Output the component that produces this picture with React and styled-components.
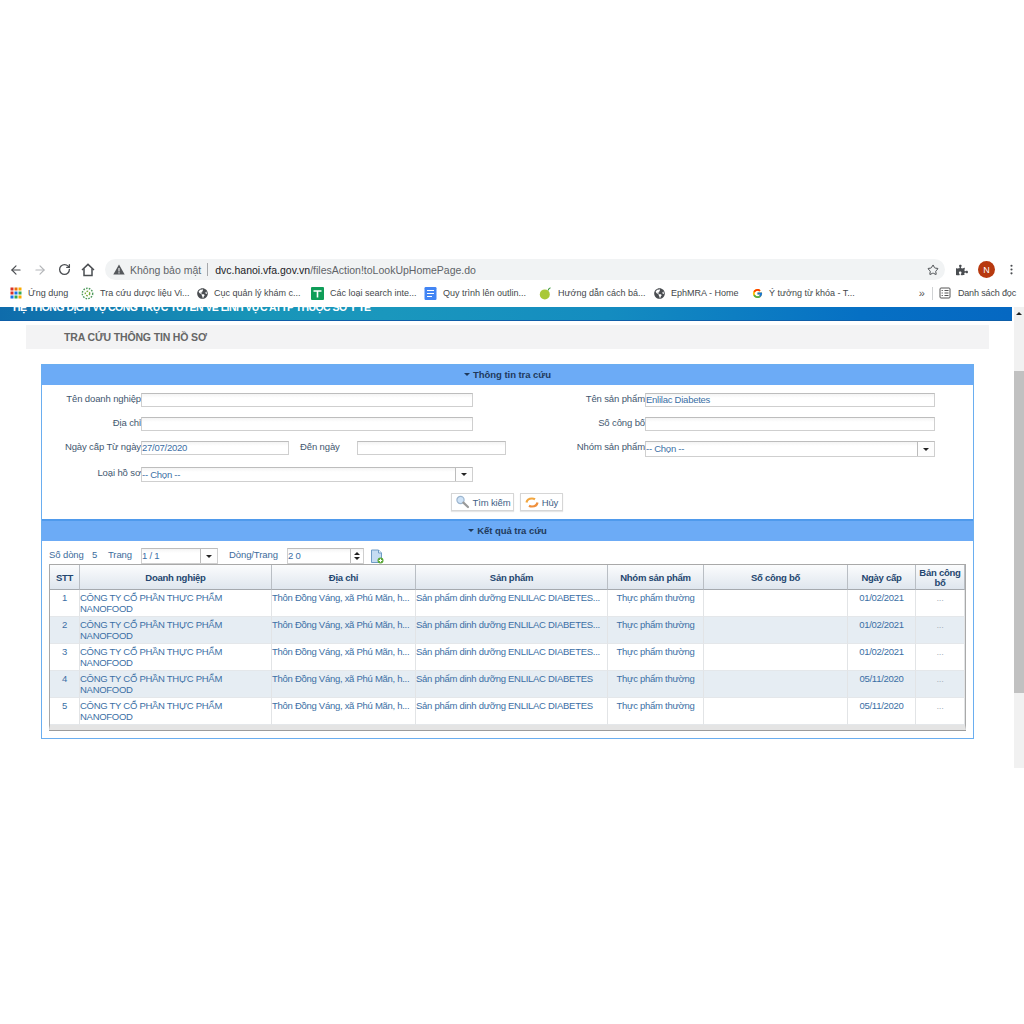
import React from 'react'
import styled, { createGlobalStyle } from 'styled-components'
import { ArrowLeft, ArrowRight, RotateCw, Star, MoreVertical } from 'lucide-react'
import { FaGlobeAmericas, FaPuzzlePiece } from 'react-icons/fa'
import { FcGoogle } from 'react-icons/fc'

const GlobalStyle = createGlobalStyle`
  html, body {
    margin: 0;
    padding: 0;
    background: #fff;
    font-family: "Liberation Sans", Arial, sans-serif;
  }
`

const Screen = styled.div`
  width: 1024px;
  height: 1024px;
  padding-top: 256px;
  box-sizing: border-box;
  overflow: hidden;
`

const Toolbar = styled.div`
  height: 27px;
  display: flex;
  align-items: center;
  color: #5f6368;
`

const NavButton = styled.span`
  width: 24px;
  height: 24px;
  display: flex;
  align-items: center;
  justify-content: center;
  color: ${(p) => (p.$off ? '#b4b6b9' : '#4a4d51')};
`

const NavGroup = styled.div`
  display: flex;
  margin-left: 4px;
`

const Omnibox = styled.div`
  margin-left: 5px;
  width: 840px;
  height: 21px;
  border-radius: 11px;
  background: #f1f3f4;
  display: flex;
  align-items: center;
  box-sizing: border-box;
  padding: 0 6px 0 8px;
  font-size: 10.5px;
  color: #5f6368;
`

const Secure = styled.span`
  margin-left: 5px;
`

const Divider = styled.span`
  width: 1px;
  height: 13px;
  background: #a6a8ab;
  margin: 0 7px 0 6px;
`

const Host = styled.span`
  color: #202124;
`

const Path = styled.span`
  color: #5f6368;
  flex: 1;
`

const ToolbarEnd = styled.div`
  display: flex;
  align-items: center;
  margin-left: 11px;
  gap: 10px;
  color: #4a4d51;
`

const Avatar = styled.span`
  width: 17px;
  height: 17px;
  border-radius: 50%;
  background: #b7390f;
  color: #fff;
  font-size: 9px;
  display: flex;
  align-items: center;
  justify-content: center;
`

const Bookmarks = styled.div`
  height: 24px;
  display: flex;
  align-items: center;
  padding-left: 10px;
  padding-bottom: 4px;
  box-sizing: border-box;
  font-size: 9px;
  color: #44474a;
  white-space: nowrap;
`

const Bookmark = styled.span`
  display: flex;
  align-items: center;
  gap: 6px;
  width: ${(p) => p.$w}px;
  flex: none;
  overflow: hidden;
`

const BookmarkEnd = styled.div`
  margin-left: auto;
  display: flex;
  align-items: center;
  padding-right: 8px;
`

const ReadingLabel = styled.span`
  margin-left: 7px;
  letter-spacing: -0.15px;
`

const Chevrons = styled.span`
  font-size: 11px;
  color: #555;
`

const BarSep = styled.span`
  width: 1px;
  height: 13px;
  background: #d0d2d4;
  margin: 0 6px 0 7px;
`

const Viewport = styled.div`
  height: 461px;
  display: flex;
`

const Page = styled.div`
  width: 1014px;
  flex: none;
`

const Banner = styled.div`
  width: 1012px;
  height: 14px;
  overflow: hidden;
  background: linear-gradient(90deg, #0f6cab 0%, #1895b8 25%, #1a97bd 38%, #148cc0 60%, #0670c4 85%, #0568c2 100%);
  border-bottom: 1px solid #0e5ea8;
  box-sizing: border-box;
  padding-left: 13px;
`

const BannerTitle = styled.div`
  margin-top: -6px;
  font-size: 10.5px;
  letter-spacing: -0.55px;
  line-height: 13px;
  font-weight: bold;
  color: #fff;
  white-space: nowrap;
`

const PageTitle = styled.h1`
  margin: 4px 0 0 26px;
  width: 963px;
  height: 24px;
  background: #f3f3f4;
  font-size: 10.5px;
  letter-spacing: -0.15px;
  line-height: 24px;
  font-weight: bold;
  color: #666;
  padding-left: 38px;
  box-sizing: border-box;
`

const Panel = styled.section`
  margin: 15px 0 0 41px;
  width: 933px;
  height: 375px;
  box-sizing: border-box;
  border: 1px solid #6aaef0;
`

const PanelHead = styled.div`
  height: ${(p) => p.$h}px;
  background: #6cabf6;
  border-top: ${(p) => (p.$line ? '2px solid #4f9aec' : 'none')};
  box-sizing: border-box;
  display: flex;
  align-items: center;
  justify-content: center;
  gap: 3px;
  padding-bottom: 2px;
  font-size: 9.5px;
  letter-spacing: -0.05px;
  font-weight: bold;
  color: #1f3a5c;
`

const Caret = styled.span`
  width: 0;
  height: 0;
  border-left: 3px solid transparent;
  border-right: 3px solid transparent;
  border-top: 3px solid ${(p) => p.$color || '#1f3a5c'};
`

const Form = styled.div`
  height: 134px;
  padding-top: 8px;
  box-sizing: border-box;
`

const FormCols = styled.div`
  display: flex;
`

const FormCol = styled.div`
  width: ${(p) => p.$w}px;
  flex: none;
  display: flex;
  flex-direction: column;
`

const FormRow = styled.div`
  height: ${(p) => p.$h || 24}px;
  display: flex;
  align-items: flex-start;
`

const Label = styled.label`
  width: ${(p) => p.$w}px;
  flex: none;
  text-align: right;
  font-size: 9.5px;
  letter-spacing: -0.12px;
  line-height: 12px;
  color: #43576f;
  white-space: nowrap;
`

const Field = styled.div`
  width: ${(p) => p.$w}px;
  height: ${(p) => p.$h || 14}px;
  flex: none;
  box-sizing: border-box;
  border: 1px solid #cfcfcf;
  border-top-color: #bdbdbd;
  background: linear-gradient(#f4f4f4, #fff 4px);
  font-size: 9.5px;
  letter-spacing: -0.25px;
  line-height: 12px;
  color: #3b6fa5;
  display: flex;
  align-items: center;
  justify-content: space-between;
  white-space: nowrap;
`

const SelectBtn = styled.span`
  width: 16px;
  align-self: stretch;
  border-left: 1px solid #bcbcbc;
  background: #fdfdfd;
  display: flex;
  align-items: center;
  justify-content: center;
`

const SpinBtn = styled.span`
  width: 12px;
  align-self: stretch;
  border-left: 1px solid #bcbcbc;
  display: flex;
  flex-direction: column;
  align-items: center;
  justify-content: center;
  gap: 2px;
`

const CaretUp = styled.span`
  width: 0;
  height: 0;
  border-left: 3px solid transparent;
  border-right: 3px solid transparent;
  border-bottom: 3px solid #222;
`

const ToLabel = styled.span`
  width: 57px;
  flex: none;
  margin-left: 11px;
  font-size: 9.5px;
  letter-spacing: -0.12px;
  line-height: 12px;
  color: #43576f;
`

const Actions = styled.div`
  display: flex;
  justify-content: center;
  gap: 6px;
  margin: 2px 1px 0 0;
`

const Button = styled.button`
  height: 18px;
  width: ${(p) => p.$w}px;
  padding: 0;
  display: flex;
  align-items: center;
  justify-content: center;
  gap: 3px;
  background: #fff;
  border: 1px solid #d6d6d6;
  box-shadow: 0 1px 1px #e6e6e6;
  font-family: inherit;
  font-size: 9.5px;
  letter-spacing: -0.15px;
  color: #3f5f86;
`

const Results = styled.div`
  padding: 7px 8px 0 7px;
`

const ResultBar = styled.div`
  height: 16px;
  display: flex;
  align-items: center;
  font-size: 9.5px;
  letter-spacing: -0.1px;
  color: #3d6c9c;
  white-space: nowrap;
`

const BarText = styled.span`
  width: ${(p) => p.$w}px;
  flex: none;
  margin: -3px 0 0 ${(p) => p.$ml || 0}px;
`

const ExportSlot = styled.span`
  margin-left: 6px;
  display: flex;
`

const Table = styled.table`
  width: 917px;
  border-collapse: separate;
  border-spacing: 0;
  table-layout: fixed;
  border: 1px solid #a9a9a9;
  border-bottom: 5px solid #e4e4e4;
  box-shadow: 0 1px 0 #9c9c9c;
  font-size: 9.5px;
`

const Th = styled.th`
  height: 25px;
  padding: 1px 0 0 0;
  box-sizing: border-box;
  background: linear-gradient(#fbfcfd, #dfe6ee);
  border-right: 1px solid #b9bec4;
  border-bottom: 1px solid #a5a9ae;
  color: #24466f;
  font-weight: bold;
  letter-spacing: -0.25px;
  line-height: 10px;
  text-align: center;
`

const Td = styled.td`
  height: 27px;
  box-sizing: border-box;
  padding: 3px 0 0 0;
  vertical-align: top;
  text-align: ${(p) => (p.$center ? 'center' : 'left')};
  border-right: 1px solid #e2e4e6;
  border-bottom: 1px solid #e4e7ea;
  color: ${(p) => (p.$faint ? '#a9b2bd' : '#3b6fa5')};
  letter-spacing: -0.28px;
  line-height: 10.5px;
  background: ${(p) => (p.$alt ? '#e6edf3' : '#fff')};
  white-space: ${(p) => (p.$wrap ? 'normal' : 'nowrap')};
`

const Scrollbar = styled.div`
  width: 10px;
  flex: none;
  background: #f1f1f1;
  display: flex;
  flex-direction: column;
  align-items: center;
`

const ScrollUp = styled.span`
  height: 13px;
  display: flex;
  align-items: center;
`

const ScrollThumb = styled.div`
  width: 100%;
  height: 322px;
  margin-top: 51px;
  background: #c1c1c1;
`

const Grid3 = () => (
  <svg width="12" height="12" viewBox="0 0 12 12">
    {['#d93025', '#e8710a', '#f9ab00', '#d93025', '#1a73e8', '#34a853', '#1a73e8', '#34a853', '#f9ab00'].map((c, i) => (
      <rect key={i} x={(i % 3) * 4 + 0.5} y={Math.floor(i / 3) * 4 + 0.5} width="3" height="3" fill={c} />
    ))}
  </svg>
)

const HomeIcon = () => (
  <svg width="14" height="14" viewBox="0 0 14 14" fill="none" stroke="#4a4d51" strokeWidth="1.5" strokeLinejoin="miter">
    <path d="M1 7 7 1.4 13 7" />
    <path d="M3 5.6V12.5H11V5.6" />
  </svg>
)

const HerbIcon = () => (
  <svg width="13" height="13" viewBox="0 0 13 13" fill="none" stroke="#4f9a5c" strokeWidth="1.4" strokeDasharray="1.6 1.2">
    <circle cx="6.5" cy="6.5" r="5.2" />
    <circle cx="6.5" cy="6.5" r="2.2" stroke="#7cab3c" />
  </svg>
)

const SheetIcon = () => (
  <svg width="13" height="13" viewBox="0 0 13 13">
    <rect width="13" height="13" rx="1" fill="#0f9d58" />
    <path d="M2.5 4h8M6.5 4v6.5" stroke="#fff" strokeWidth="1.6" fill="none" />
  </svg>
)

const DocIcon = () => (
  <svg width="13" height="13" viewBox="0 0 13 13">
    <rect x="0.5" width="12" height="13" rx="1.2" fill="#4285f4" />
    <path d="M3 3.5h7M3 6.5h7M3 9.5h5" stroke="#fff" strokeWidth="1.2" fill="none" />
  </svg>
)

const FruitIcon = () => (
  <svg width="13" height="13" viewBox="0 0 13 13">
    <circle cx="5.8" cy="7.4" r="5" fill="#a9c837" />
    <path d="M9.2 3.4c.2-1.3 1-2.2 2.3-2.6" stroke="#3c9a3f" strokeWidth="1.2" fill="none" />
  </svg>
)

const ReadingIcon = () => (
  <svg width="12" height="12" viewBox="0 0 12 12" fill="none" stroke="#555" strokeWidth="1">
    <rect x="1" y="1" width="10" height="10" rx="1" />
    <path d="M5.5 3.5h4M5.5 6h4M5.5 8.5h4M2.6 3.5h1.2M2.6 6h1.2M2.6 8.5h1.2" />
  </svg>
)

const Warning = () => (
  <svg width="12" height="11" viewBox="0 0 12 11">
    <path d="M6 .5 11.7 10.5H.3Z" fill="#55585c" />
    <path d="M6 4v3.4M6 8.2v1.2" stroke="#f1f3f4" strokeWidth="1.1" />
  </svg>
)

const SearchIcon = () => (
  <svg width="15" height="14" viewBox="0 0 15 14">
    <circle cx="5.5" cy="5" r="3.6" fill="#cfe3f7" stroke="#9db6cf" strokeWidth="1.2" />
    <path d="M8.4 7.6 13 12" stroke="#9a9a9a" strokeWidth="2.2" strokeLinecap="round" />
  </svg>
)

const ResetIcon = () => (
  <svg width="14" height="11" viewBox="0 0 14 11" fill="none" strokeWidth="2.2">
    <path d="M1.5 5.5C2 2.8 4.2 1.5 7 1.5c1.2 0 2.2.3 3 .8" stroke="#f2a63f" />
    <path d="M12.5 5.5C12 8.2 9.8 9.5 7 9.5c-1.2 0-2.2-.3-3-.8" stroke="#ef8f3c" />
  </svg>
)

const ExportIcon = () => (
  <svg width="14" height="15" viewBox="0 0 14 15">
    <path d="M1.5 1h7l3 3v9.5h-10Z" fill="#c5dcf2" stroke="#6f9cc6" />
    <path d="M8.5 1v3h3" fill="#eef5fb" stroke="#6f9cc6" />
    <circle cx="10.5" cy="11.5" r="3" fill="#5aa838" />
    <path d="M10.5 9.8v3.4M8.8 11.5h3.4" stroke="#fff" strokeWidth="1" />
  </svg>
)

const columns = [
  { title: 'STT', width: 30 },
  { title: 'Doanh nghiệp', width: 192 },
  { title: 'Địa chỉ', width: 144 },
  { title: 'Sản phẩm', width: 192 },
  { title: 'Nhóm sản phẩm', width: 96 },
  { title: 'Số công bố', width: 144 },
  { title: 'Ngày cấp', width: 68 },
  { title: 'Bản công bố', width: 49 },
]

const rows = [
  { id: 1, product: 'Sản phẩm dinh dưỡng ENLILAC DIABETES...', date: '01/02/2021' },
  { id: 2, product: 'Sản phẩm dinh dưỡng ENLILAC DIABETES...', date: '01/02/2021' },
  { id: 3, product: 'Sản phẩm dinh dưỡng ENLILAC DIABETES...', date: '01/02/2021' },
  { id: 4, product: 'Sản phẩm dinh dưỡng ENLILAC DIABETES', date: '05/11/2020' },
  { id: 5, product: 'Sản phẩm dinh dưỡng ENLILAC DIABETES', date: '05/11/2020' },
]

const App = () => (
  <Screen>
    <GlobalStyle />
    <Toolbar>
      <NavGroup>
        <NavButton><ArrowLeft size={14} strokeWidth={2} /></NavButton>
        <NavButton $off><ArrowRight size={14} strokeWidth={2} /></NavButton>
        <NavButton><RotateCw size={13} strokeWidth={2.4} /></NavButton>
        <NavButton><HomeIcon /></NavButton>
      </NavGroup>
      <Omnibox>
        <Warning />
        <Secure>Không bảo mật</Secure>
        <Divider />
        <Host>dvc.hanoi.vfa.gov.vn</Host>
        <Path>/filesAction!toLookUpHomePage.do</Path>
        <Star size={12} color="#4a4d51" />
      </Omnibox>
      <ToolbarEnd>
        <FaPuzzlePiece size={12} />
        <Avatar>N</Avatar>
        <MoreVertical size={13} />
      </ToolbarEnd>
    </Toolbar>
    <Bookmarks>
      <Bookmark $w={71}><Grid3 />Ứng dụng</Bookmark>
      <Bookmark $w={116}><HerbIcon />Tra cứu dược liệu Vi...</Bookmark>
      <Bookmark $w={114}><FaGlobeAmericas size={11} color="#4a4d51" />Cục quản lý khám c...</Bookmark>
      <Bookmark $w={113}><SheetIcon />Các loại search inte...</Bookmark>
      <Bookmark $w={115}><DocIcon />Quy trình lên outlin...</Bookmark>
      <Bookmark $w={115}><FruitIcon />Hướng dẫn cách bá...</Bookmark>
      <Bookmark $w={98}><FaGlobeAmericas size={11} color="#4a4d51" />EphMRA - Home</Bookmark>
      <Bookmark $w={110}><FcGoogle size={11} />Ý tưởng từ khóa - T...</Bookmark>
      <BookmarkEnd>
        <Chevrons>»</Chevrons>
        <BarSep />
        <ReadingIcon />
        <ReadingLabel>Danh sách đọc</ReadingLabel>
      </BookmarkEnd>
    </Bookmarks>
    <Viewport>
      <Page>
        <Banner>
          <BannerTitle>HỆ THỐNG DỊCH VỤ CÔNG TRỰC TUYẾN VỀ LĨNH VỰC ATTP THUỘC SỞ Y TẾ</BannerTitle>
        </Banner>
        <PageTitle>TRA CỨU THÔNG TIN HỒ SƠ</PageTitle>
        <Panel>
          <PanelHead $h={20}><Caret />Thông tin tra cứu</PanelHead>
          <Form>
            <FormCols>
              <FormCol $w={504}>
                <FormRow>
                  <Label $w={99}>Tên doanh nghiệp</Label>
                  <Field $w={332} />
                </FormRow>
                <FormRow>
                  <Label $w={99}>Địa chỉ</Label>
                  <Field $w={332} />
                </FormRow>
                <FormRow $h={26}>
                  <Label $w={99}>Ngày cấp Từ ngày</Label>
                  <Field $w={148}>27/07/2020</Field>
                  <ToLabel>Đến ngày</ToLabel>
                  <Field $w={149} />
                </FormRow>
                <FormRow>
                  <Label $w={99}>Loại hồ sơ</Label>
                  <Field $w={332} $h={15}>-- Chọn --<SelectBtn><Caret $color="#222" /></SelectBtn></Field>
                </FormRow>
              </FormCol>
              <FormCol $w={427}>
                <FormRow>
                  <Label $w={99}>Tên sản phẩm</Label>
                  <Field $w={290}>Enlilac Diabetes</Field>
                </FormRow>
                <FormRow>
                  <Label $w={99}>Số công bố</Label>
                  <Field $w={290} />
                </FormRow>
                <FormRow>
                  <Label $w={99}>Nhóm sản phẩm</Label>
                  <Field $w={290} $h={16}>-- Chọn --<SelectBtn><Caret $color="#222" /></SelectBtn></Field>
                </FormRow>
              </FormCol>
            </FormCols>
            <Actions>
              <Button $w={63}><SearchIcon />Tìm kiếm</Button>
              <Button $w={43}><ResetIcon />Hủy</Button>
            </Actions>
          </Form>
          <PanelHead $h={22} $line><Caret />Kết quả tra cứu</PanelHead>
          <Results>
            <ResultBar>
              <BarText $w={43}>Số dòng</BarText>
              <BarText $w={16}>5</BarText>
              <BarText $w={33}>Trang</BarText>
              <Field $w={77} $h={16}>1 / 1<SelectBtn><Caret $color="#222" /></SelectBtn></Field>
              <BarText $w={58} $ml={11}>Dòng/Trang</BarText>
              <Field $w={77} $h={16}>2 0<SpinBtn><CaretUp /><Caret $color="#222" /></SpinBtn></Field>
              <ExportSlot><ExportIcon /></ExportSlot>
            </ResultBar>
            <Table>
              <colgroup>
                {columns.map((c) => <col key={c.title} style={{ width: c.width }} />)}
              </colgroup>
              <thead>
                <tr>
                  {columns.map((c) => <Th key={c.title}>{c.title}</Th>)}
                </tr>
              </thead>
              <tbody>
                {rows.map((r) => {
                  const alt = r.id % 2 === 0
                  return (
                    <tr key={r.id}>
                      <Td $alt={alt} $center>{r.id}</Td>
                      <Td $alt={alt} $wrap>CÔNG TY CỔ PHẦN THỰC PHẨM NANOFOOD</Td>
                      <Td $alt={alt}>Thôn Đồng Váng, xã Phú Mãn, h...</Td>
                      <Td $alt={alt}>{r.product}</Td>
                      <Td $alt={alt} $center>Thực phẩm thường</Td>
                      <Td $alt={alt} />
                      <Td $alt={alt} $center>{r.date}</Td>
                      <Td $alt={alt} $center $faint>...</Td>
                    </tr>
                  )
                })}
              </tbody>
            </Table>
          </Results>
        </Panel>
      </Page>
      <Scrollbar>
        <ScrollUp><CaretUp /></ScrollUp>
        <ScrollThumb />
      </Scrollbar>
    </Viewport>
  </Screen>
)

export default App
